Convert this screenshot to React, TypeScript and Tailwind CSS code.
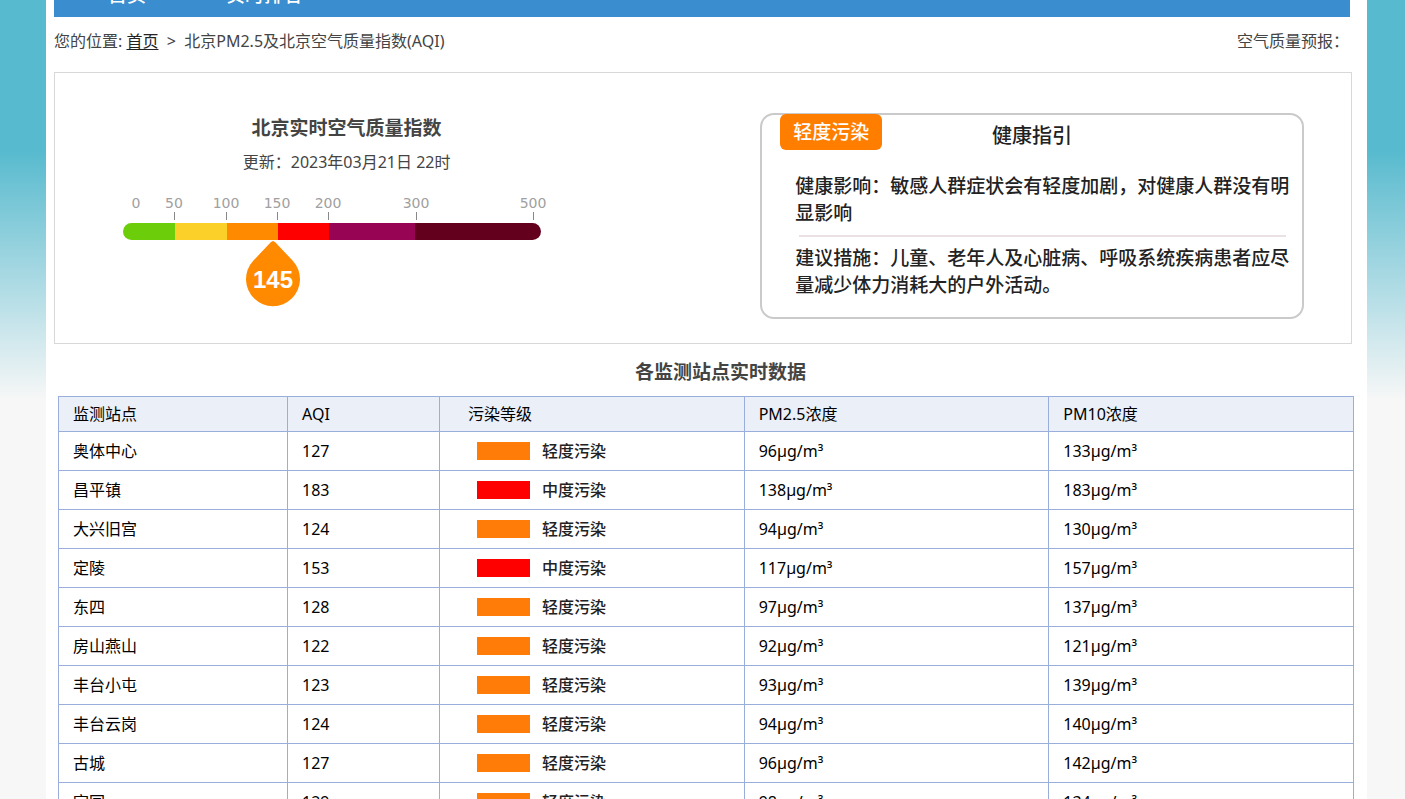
const stations = [
  { name: "奥体中心", aqi: 127, moderate: false, pm25: 96, pm10: 133 },
  { name: "昌平镇", aqi: 183, moderate: true, pm25: 138, pm10: 183 },
  { name: "大兴旧宫", aqi: 124, moderate: false, pm25: 94, pm10: 130 },
  { name: "定陵", aqi: 153, moderate: true, pm25: 117, pm10: 157 },
  { name: "东四", aqi: 128, moderate: false, pm25: 97, pm10: 137 },
  { name: "房山燕山", aqi: 122, moderate: false, pm25: 92, pm10: 121 },
  { name: "丰台小屯", aqi: 123, moderate: false, pm25: 93, pm10: 139 },
  { name: "丰台云岗", aqi: 124, moderate: false, pm25: 94, pm10: 140 },
  { name: "古城", aqi: 127, moderate: false, pm25: 96, pm10: 142 },
  { name: "官园", aqi: 129, moderate: false, pm25: 98, pm10: 134 },
];

const segments = [
  { from: 0, to: 52, color: "#6ccd0a" },
  { from: 52, to: 104, color: "#fbd029" },
  { from: 104, to: 155, color: "#ff8a00" },
  { from: 155, to: 206, color: "#ff0000" },
  { from: 206, to: 292, color: "#970454" },
  { from: 292, to: 418, color: "#62001e" },
];

const ticks = [
  { value: 0, x: 13 },
  { value: 50, x: 51 },
  { value: 100, x: 103 },
  { value: 150, x: 154 },
  { value: 200, x: 205 },
  { value: 300, x: 293 },
  { value: 500, x: 410 },
];

function Gauge() {
  return (
    <svg width="426" height="120" viewBox="0 0 426 120" role="img" aria-label="AQI 145">
      <defs>
        <clipPath id="bar">
          <rect x="0" y="33" width="418" height="17" rx="8.5" />
        </clipPath>
      </defs>
      {ticks.map((t) => (
        <g key={t.value}>
          <text
            x={t.x}
            y="18"
            textAnchor="middle"
            fontSize="14"
            fill="#a0a0a0"
            fontFamily="'DejaVu Sans', sans-serif"
          >
            {t.value}
          </text>
          {t.value > 0 && <rect x={t.x} y="22" width="1" height="8" fill="#888" />}
        </g>
      ))}
      <g clipPath="url(#bar)">
        {segments.map((s) => (
          <rect key={s.from} x={s.from} y="33" width={s.to - s.from} height="17" fill={s.color} />
        ))}
      </g>
      <path
        d="M150 51 Q151 51 152.500 52.500 L170 71 A27 27 0 1 1 130 71 L147.500 52.500 Q149 51 150 51Z"
        fill="#ff8a00"
      />
      <text
        x="150"
        y="98"
        textAnchor="middle"
        fontSize="24"
        fontWeight="bold"
        fill="#fff"
        fontFamily="'Liberation Sans', sans-serif"
      >
        145
      </text>
    </svg>
  );
}

function HealthCard() {
  return (
    <section className="mt-10 mr-[47px] ml-[122px] h-[206px] rounded-[14px] border-2 border-[#cacaca] text-[#222]">
      <div className="grid grid-cols-[102px_1fr_102px] items-start px-[18px]">
        <span className="-mt-px rounded-md bg-[#ff7e00] text-center text-[19px] leading-[36px] font-medium text-white">
          轻度污染
        </span>
        <h2 className="pt-1 text-center text-[20px] leading-[34px] font-medium">健康指引</h2>
      </div>
      <div className="mr-2 ml-[33px] pt-5 text-[19px] leading-[27px] font-medium">
        <p>健康影响：敏感人群症状会有轻度加剧，对健康人群没有明显影响</p>
        <hr className="mt-2 mr-2 mb-2 ml-1 border-t-2 border-[#e9e1e3]" />
        <p>建议措施：儿童、老年人及心脏病、呼吸系统疾病患者应尽量减少体力消耗大的户外活动。</p>
      </div>
    </section>
  );
}

const cell = "border border-[#99aedb] pl-[14px] text-left font-normal";
const levelCell = "border border-[#99aedb] text-left font-normal";

export default function App() {
  return (
    <div className="min-h-screen bg-[#f7f7f7] bg-[linear-gradient(to_bottom,#57bace_0px,#57bace_150px,#f7f7f7_400px)] pr-[38px] pl-[46px] font-['Noto_Sans','Noto_Sans_CJK_SC',sans-serif] text-[16px] text-[#444]">
      <div className="flow-root bg-white pl-2">
        <nav className="-mt-[27px] mr-[17px] flex h-11 items-center gap-20 bg-[#3a8dcf] pl-[54px] text-[19px] font-medium text-white">
          <a href="#home">首页</a>
          <a href="#ranking">实时排名</a>
        </nav>

        <div className="mr-[18px] flex h-[55px] items-center justify-between pb-2">
          <div>
            您的位置:{" "}
            <a href="#home" className="text-[#222] underline underline-offset-2">
              首页
            </a>
            &nbsp; &gt;&nbsp; 北京PM2.5及北京空气质量指数(AQI)
          </div>
          <span>空气质量预报：</span>
        </div>

        <section className="mr-[15px] grid h-[272px] grid-cols-[45%_1fr] border border-[#d8d8d8]">
          <div>
            <h1 className="pt-[41px] text-center text-[19px] leading-[28px] font-bold">
              北京实时空气质量指数
            </h1>
            <p className="pt-[7px] text-center leading-[26px]">更新：2023年03月21日 22时</p>
            <div className="mt-[15px] ml-[68px]">
              <Gauge />
            </div>
          </div>
          <HealthCard />
        </section>

        <h2 className="mt-[13px] mb-[9px] pl-5 text-center text-[19px] leading-[30px] font-bold">
          各监测站点实时数据
        </h2>

        <div className="mr-[13px] ml-1">
          <table className="w-full table-fixed border-collapse text-black">
            <colgroup>
              <col className="w-[229px]" />
              <col className="w-[152px]" />
              <col />
              <col />
              <col />
            </colgroup>
            <thead>
              <tr className="h-[35px] bg-[#eaeff8]">
                <th className={cell}>监测站点</th>
                <th className={cell}>AQI</th>
                <th className={levelCell}>
                  <span className="pl-7">污染等级</span>
                </th>
                <th className={cell}>PM2.5浓度</th>
                <th className={cell}>PM10浓度</th>
              </tr>
            </thead>
            <tbody>
              {stations.map((s) => (
                <tr key={s.name} className="h-[39px]">
                  <td className={cell}>{s.name}</td>
                  <td className={cell}>{s.aqi}</td>
                  <td className={levelCell}>
                    <div className="flex items-center gap-3 pl-[37px] font-medium text-[#222]">
                      <span
                        className={
                          s.moderate ? "h-[18px] w-[53px] bg-[#ff0000]" : "h-[18px] w-[53px] bg-[#ff7c08]"
                        }
                      />
                      <span>{s.moderate ? "中度污染" : "轻度污染"}</span>
                    </div>
                  </td>
                  <td className={cell}>{s.pm25}µg/m³</td>
                  <td className={cell}>{s.pm10}µg/m³</td>
                </tr>
              ))}
            </tbody>
          </table>
        </div>
      </div>
    </div>
  );
}
